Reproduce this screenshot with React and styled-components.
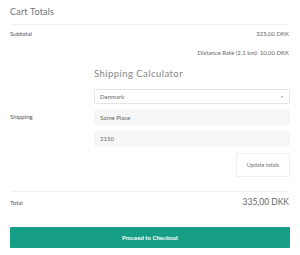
import React from "react";
import styled, { createGlobalStyle } from "styled-components";

const Global = createGlobalStyle`
  html, body { margin: 0; padding: 0; background: #fff; }
  body { font-family: Lato, "Open Sans", sans-serif; color: #666; }
  * { box-sizing: border-box; }
`;

const Wrap = styled.div`
  width: 300px;
  height: 255px;
  padding: 0 10px;
  overflow: hidden;
`;

const Title = styled.h2`
  margin: 0;
  padding: 6px 0 6px;
  font-size: 9px;
  line-height: 12px;
  font-weight: 400;
  color: #707070;
  letter-spacing: 0.2px;
`;

const Divider = styled.div`
  height: 1px;
  background: #f0f0f0;
  margin: 0 2px;
`;

const Row = styled.div`
  display: flex;
  justify-content: space-between;
  align-items: ${(p) => p.$align || "flex-start"};
  padding-top: ${(p) => p.$pt || 0}px;
  height: ${(p) => p.$h}px;
`;

const Label = styled.div`
  font-size: 6px;
  line-height: 8px;
  color: #555;
  padding-top: ${(p) => p.$pt || 0}px;
`;

const Value = styled.div`
  font-size: ${(p) => p.$size || 6}px;
  line-height: ${(p) => (p.$size ? 11 : 8)}px;
  color: #666;
  text-align: right;
  padding-right: 1px;
`;

const ShipGrid = styled.div`
  display: grid;
  grid-template-columns: 84px 1fr;
  height: 146px;
`;

const ShipRight = styled.div`
  display: flex;
  flex-direction: column;
`;

const Rate = styled.div`
  font-size: 6px;
  line-height: 8px;
  color: #666;
  text-align: right;
  padding-right: 1px;
  margin-top: 4px;
`;

const CalcTitle = styled.h3`
  margin: 11px 0 0;
  font-size: 9.5px;
  line-height: 12px;
  font-weight: 400;
  color: #858585;
  letter-spacing: 0.45px;
`;

const Field = styled.div`
  height: 15px;
  margin-top: ${(p) => p.$mt}px;
  display: flex;
  align-items: center;
  justify-content: space-between;
  padding: 0 5px;
  font-size: 6px;
  color: #666;
  background: ${(p) => (p.$select ? "#fff" : "#f6f6f6")};
  border: 1px solid ${(p) => (p.$select ? "#e4e4e4" : "#f3f3f3")};
  border-radius: 2px;
`;

const Arrow = styled.span`
  width: 0;
  height: 0;
  border-left: 1.5px solid transparent;
  border-right: 1.5px solid transparent;
  border-top: 2px solid #999;
  margin-right: 1px;
`;

const UpdateBtn = styled.button`
  align-self: flex-end;
  margin-top: 7px;
  width: 54px;
  height: 24px;
  border: 1px solid #eeeeee;
  border-radius: 2px;
  background: #fff;
  font-family: Lato, sans-serif;
  font-size: 5.5px;
  color: #777;
  padding: 0;
`;

const Checkout = styled.button`
  display: block;
  width: 280px;
  height: 21px;
  margin-top: 21px;
  border: none;
  border-radius: 1px;
  background: #179e86;
  color: #fff;
  font-family: Lato, sans-serif;
  font-weight: 700;
  font-size: 6px;
  padding: 0;
`;

export default function App() {
  return (
    <>
      <Global />
      <Wrap>
        <Title>Cart Totals</Title>
        <Divider />
        <Row $pt={5} $h={20}>
          <Label>Subtotal</Label>
          <Value>325,00 DKK</Value>
        </Row>
        <ShipGrid>
          <Label $pt={68}>Shipping</Label>
          <ShipRight>
            <Rate>Distance Rate (2.1 km): 10,00 DKK</Rate>
            <CalcTitle>Shipping Calculator</CalcTitle>
            <Field $select $mt={9}>
              <span>Denmark</span>
              <Arrow />
            </Field>
            <Field $mt={6}>Some Place</Field>
            <Field $mt={6}>2150</Field>
            <UpdateBtn>Update totals</UpdateBtn>
          </ShipRight>
        </ShipGrid>
        <Divider />
        <Row $pt={7} $h={14} $align="center">
          <Label>Total</Label>
          <Value $size={8.5}>335,00 DKK</Value>
        </Row>
        <Checkout>Proceed to Checkout</Checkout>
      </Wrap>
    </>
  );
}
